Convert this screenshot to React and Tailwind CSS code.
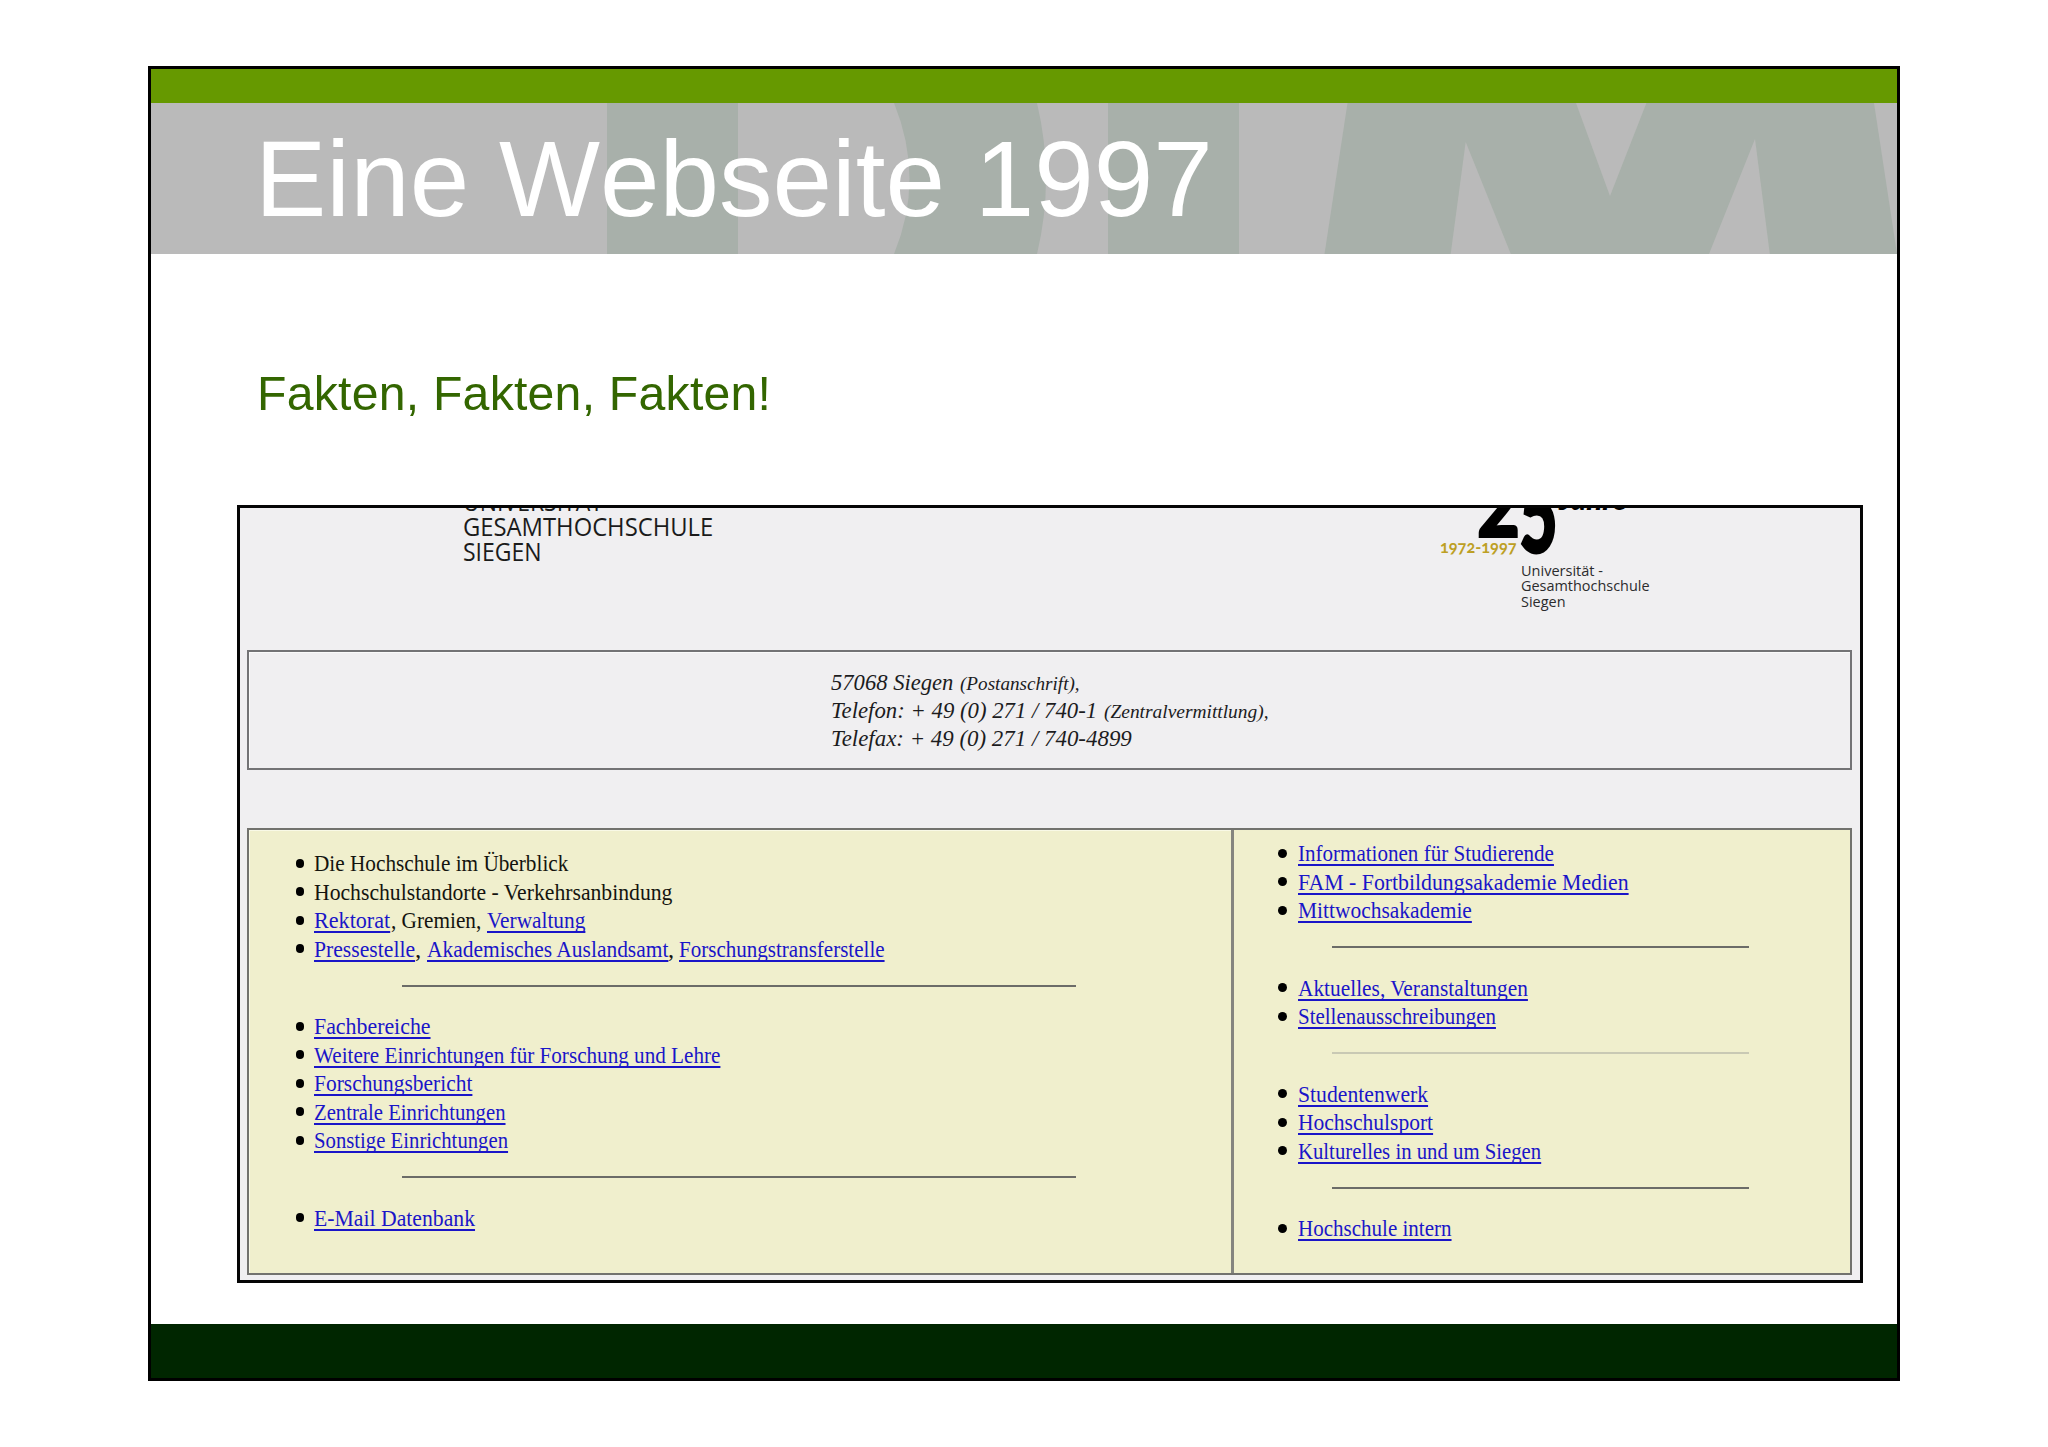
import { useLayoutEffect, useRef, useState } from 'react';

const leftGroups = [
  [
    [{ text: 'Die Hochschule im Überblick', w: 254.5 }],
    [{ text: 'Hochschulstandorte - Verkehrsanbindung', w: 358.5 }],
    [
      { text: 'Rektorat', w: 76.7, link: true },
      { text: ', Gremien, ', w: 96 },
      { text: 'Verwaltung', w: 98.3, link: true },
    ],
    [
      { text: 'Pressestelle', w: 100.7, link: true },
      { text: ', ', w: 12 },
      { text: 'Akademisches Auslandsamt', w: 241, link: true },
      { text: ', ', w: 11.7 },
      { text: 'Forschungstransferstelle', w: 205.7, link: true },
    ],
  ],
  [
    [{ text: 'Fachbereiche', w: 117, link: true }],
    [{ text: 'Weitere Einrichtungen für Forschung und Lehre', w: 406.3, link: true }],
    [{ text: 'Forschungsbericht', w: 158, link: true }],
    [{ text: 'Zentrale Einrichtungen', w: 191.7, link: true }],
    [{ text: 'Sonstige Einrichtungen', w: 193.7, link: true }],
  ],
  [[{ text: 'E-Mail Datenbank', w: 161, link: true }]],
];

const rightGroups = [
  [
    [{ text: 'Informationen für Studierende', w: 255.7, link: true }],
    [{ text: 'FAM - Fortbildungsakademie Medien', w: 330.7, link: true }],
    [{ text: 'Mittwochsakademie', w: 174, link: true }],
  ],
  [
    [{ text: 'Aktuelles, Veranstaltungen', w: 229.7, link: true }],
    [{ text: 'Stellenausschreibungen', w: 197.7, link: true }],
  ],
  [
    [{ text: 'Studentenwerk', w: 130.3, link: true }],
    [{ text: 'Hochschulsport', w: 135, link: true }],
    [{ text: 'Kulturelles in und um Siegen', w: 243, link: true }],
  ],
  [[{ text: 'Hochschule intern', w: 154, link: true }]],
];

// Squeezes or stretches a single line of text to the given width
function Fit({ w, className = '', children }) {
  const ref = useRef(null);
  const [scale, setScale] = useState(1);

  useLayoutEffect(() => {
    setScale(w / ref.current.offsetWidth);
  }, [w]);

  return (
    <span className="inline-block whitespace-pre" style={{ width: w }}>
      <span
        ref={ref}
        className={`inline-block origin-left ${className}`}
        style={{ transform: `scaleX(${scale})` }}
      >
        {children}
      </span>
    </span>
  );
}

function HeaderArt() {
  return (
    <svg className="absolute inset-0" width="1746" height="151" viewBox="0 0 1746 151" fill="#a8b0aa">
      <rect x="456" y="0" width="131" height="151" />
      <path d="M743 0 Q774 76 743 151 H886 Q904 76 886 0 Z" />
      <rect x="957" y="0" width="131" height="151" />
      <path d="M1196.5 0 H1723 L1746 151 H1173.5 Z" />
      <g fill="#bababa">
        <path d="M1314.7 39 L1359.8 151 H1299.7 Z" />
        <path d="M1425 0 H1495.4 L1459 93 Z" />
        <path d="M1604 36 L1618.8 151 H1558 Z" />
      </g>
    </svg>
  );
}

function AnniversaryLogo() {
  return (
    <svg width="230" height="110" viewBox="0 0 230 110" className="shrink-0 overflow-hidden">
      <g fontFamily="Lato, sans-serif" fontWeight="900" fill="#000">
        <text x="42" y="28.5" fontSize="88" textLength="43" lengthAdjust="spacingAndGlyphs" stroke="#000" strokeWidth="2">2</text>
        <text x="84.5" y="44" fontSize="104" textLength="38" lengthAdjust="spacingAndGlyphs" stroke="#000" strokeWidth="3">5</text>
        <text x="124" y="2" fontSize="28" fontStyle="italic" textLength="68" lengthAdjust="spacingAndGlyphs">Jahre</text>
      </g>
      <text x="5" y="44.5" fontSize="16.5" fontWeight="700" fontFamily="Lato, sans-serif" fill="#bd9f24" textLength="76.5" lengthAdjust="spacingAndGlyphs" className="oldstyle-nums">1972-1997</text>
      <g fontFamily="'Open Sans', sans-serif" fontSize="14" fontWeight="500" fill="#2b2b2d">
        <text x="86" y="67.5" textLength="82" lengthAdjust="spacingAndGlyphs">Universität -</text>
        <text x="86" y="83" textLength="128.5" lengthAdjust="spacingAndGlyphs">Gesamthochschule</text>
        <text x="86" y="98.5" textLength="44.5" lengthAdjust="spacingAndGlyphs">Siegen</text>
      </g>
    </svg>
  );
}

function LinkList({ groups, rowClass, bulletClass, ruleClass, paleRule }) {
  return groups.map((rows, g) => (
    <div key={g}>
      {g > 0 && (
        <div className={`mt-[20.5px] mb-[26.5px] h-[2px] ${ruleClass} ${g === paleRule ? 'bg-[#c9c9b4]' : 'bg-[#6c6c68]'}`} />
      )}
      <ul>
        {rows.map((parts, r) => (
          <li key={r} className={`flex h-[28.5px] items-center ${rowClass}`}>
            <span className={`mb-[2px] h-[9px] rounded-full bg-black ${bulletClass}`} />
            {parts.map((part) => (
              <Fit
                key={part.text + part.w}
                w={part.w}
                className={
                  part.link
                    ? 'text-[#1a15c8] underline decoration-[1.6px] underline-offset-[3px] [text-decoration-skip-ink:none]'
                    : 'text-[#14140f]'
                }
              >
                {part.text}
              </Fit>
            ))}
          </li>
        ))}
      </ul>
    </div>
  ));
}

export default function App() {
  return (
    <div className="h-[1447px] w-[2048px] overflow-hidden bg-white pt-[66px] pl-[148px] font-['Liberation_Sans',Arial,sans-serif]">
      <div className="flex h-[1315px] w-[1752px] flex-col border-[3px] border-black bg-white">
        <div className="h-[34px] shrink-0 bg-[#669900]" />
        <header className="relative h-[151px] shrink-0 overflow-hidden bg-[#bababa] pl-[104px]">
          <HeaderArt />
          <h1 className="relative pt-[16px] text-[107px] leading-[120px] whitespace-nowrap text-white [font-kerning:none]">Eine Webseite 1997</h1>
        </header>

        <h2 className="mt-[111px] ml-[106px] h-[140px] shrink-0 text-[48.2px] leading-[56px] tracking-[0.23px] text-[#336600] [font-kerning:none]">
          Fakten, Fakten, Fakten!
        </h2>

        <main className="ml-[86px] h-[778px] w-[1626px] shrink-0 overflow-hidden border-[3px] border-[#050505] bg-[#f0eff1] font-['Liberation_Serif','Times_New_Roman',serif]">
          <div className="flex h-[142px] items-start overflow-hidden">
            <div className="-mt-[19px] ml-[223px] flex w-[972px] flex-col font-['Open_Sans',sans-serif] text-[25.6px] leading-[25px] font-medium text-[#1b1b1b]">
              <Fit w={140}>UNIVERSITÄT</Fit>
              <Fit w={250}>GESAMTHOCHSCHULE</Fit>
              <Fit w={79}>SIEGEN</Fit>
            </div>
            <AnniversaryLogo />
          </div>

          <address className="ml-[7px] h-[120px] w-[1605px] border-2 border-[#737375] pt-[16.5px] pl-[582px] text-[22.6px] leading-[28.4px] text-[#1c1c1e] shadow-[inset_1px_1px_0_#fafafa]">
            <div className="h-[28.4px]">
              <Fit w={122}>57068 Siegen</Fit>
              <Fit w={7}> </Fit>
              <Fit w={120} className="text-[18.5px]">(Postanschrift),</Fit>
            </div>
            <div className="h-[28.4px]">
              <Fit w={266}>Telefon: + 49 (0) 271 / 740-1</Fit>
              <Fit w={7}> </Fit>
              <Fit w={164} className="text-[18px]">(Zentralvermittlung),</Fit>
            </div>
            <div className="h-[28.4px]">
              <Fit w={301}>Telefax: + 49 (0) 271 / 740-4899</Fit>
            </div>
          </address>

          <div className="mt-[58px] ml-[7px] flex h-[447px] w-[1605px] border-2 border-[#72726e] bg-[#f0efcd] text-[22.8px] leading-[28.5px]">
            <div className="w-[982px] pt-[20px] shadow-[inset_1px_1px_0_#f9f9e6]">
              <LinkList
                groups={leftGroups}
                rowClass="pl-[47px]"
                bulletClass="mr-[10px] w-[8px]"
                ruleClass="ml-[153px] w-[674px]"
              />
            </div>
            <div className="flex-1 border-l-[3px] border-[#85857f] pt-[10px]">
              <LinkList
                groups={rightGroups}
                rowClass="pl-[44px]"
                bulletClass="mr-[11px] w-[9px]"
                ruleClass="ml-[98px] w-[417px]"
                paleRule={2}
              />
            </div>
          </div>
        </main>

        <footer className="mt-auto h-[54px] shrink-0 bg-[#002600]" />
      </div>
    </div>
  );
}
